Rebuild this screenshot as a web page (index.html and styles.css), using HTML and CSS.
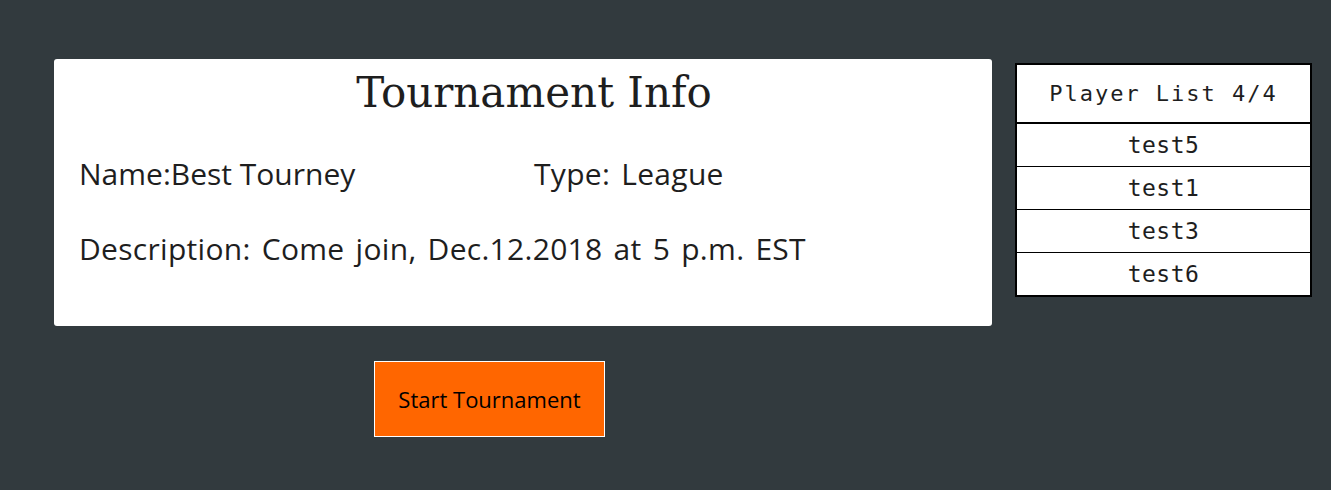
FILE: index.html
```html
<!DOCTYPE html>
<html>
<head>
<meta charset="utf-8">
<link rel="stylesheet" href="styles.css">
</head>
<body>
<div class="page">
  <div class="main">
    <div class="card">
      <h1 class="title">Tournament Info</h1>
      <div class="row">
        <div class="field name">Name:Best Tourney</div>
        <div class="field">Type: League</div>
      </div>
      <div class="field desc">Description: Come join, Dec.12.2018 at 5 p.m. EST</div>
    </div>
    <div class="actions">
      <button class="start">Start Tournament</button>
    </div>
  </div>
  <div class="players">
    <div class="players-head">Player List 4/4</div>
    <div class="player">test5</div>
    <div class="player">test1</div>
    <div class="player">test3</div>
    <div class="player">test6</div>
  </div>
</div>
</body>
</html>
```
FILE: styles.css
```css
html, body {
  margin: 0;
  padding: 0;
  background: #323a3e;
  height: 100%;
}
.page {
  display: flex;
  align-items: flex-start;
  padding: 59px 0 0 54px;
  gap: 23px;
}
.main {
  width: 938px;
}
.card {
  background: #fff;
  border-radius: 3px;
  height: 267px;
  box-sizing: border-box;
  padding: 10px 25px 0 25px;
  color: #1e1e1e;
}
.title {
  margin: 0 0 0 22px;
  text-align: center;
  font-family: "DejaVu Serif", "Liberation Serif", serif;
  font-weight: normal;
  font-size: 42px;
  line-height: 48px;
}
.row {
  display: flex;
  margin-top: 37px;
}
.field {
  font-family: "Open Sans", "Noto Sans", sans-serif;
  font-size: 30px;
  line-height: 40px;
  letter-spacing: 0.3px;
  word-spacing: 3px;
}
.name {
  width: 455px;
  letter-spacing: 0;
  word-spacing: 0;
}
.desc {
  margin-top: 35px;
}
.actions {
  padding: 35px 0 0 320px;
}
.start {
  width: 231px;
  height: 76px;
  background: #ff6600;
  border: 1px solid #fff;
  color: #000;
  font-family: "Open Sans", "Noto Sans", sans-serif;
  font-size: 22px;
  padding: 0;
}
.players {
  margin-top: 4px;
  width: 297px;
  border: 2px solid #000;
  background: #fff;
  box-sizing: border-box;
  font-family: "DejaVu Sans Mono", "Liberation Mono", monospace;
  color: #1e1e1e;
}
.players-head {
  height: 57px;
  border-bottom: 2px solid #000;
  display: flex;
  align-items: center;
  justify-content: center;
  font-size: 22px;
  letter-spacing: 2px;
}
.player {
  height: 42px;
  border-bottom: 1px solid #000;
  display: flex;
  align-items: center;
  justify-content: center;
  font-size: 23px;
  letter-spacing: 0.5px;
}
.player:last-child {
  border-bottom: none;
}
```
